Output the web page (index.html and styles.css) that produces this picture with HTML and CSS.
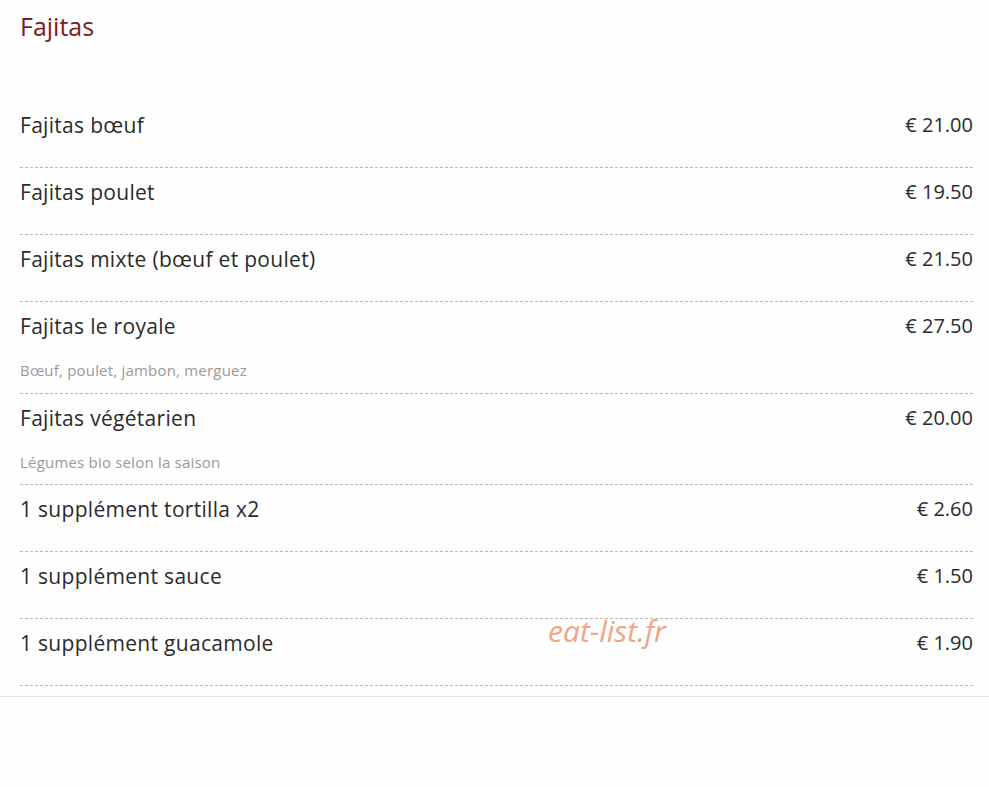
FILE: index.html
```html
<!DOCTYPE html>
<html lang="fr">
<head>
<meta charset="utf-8">
<title>Fajitas</title>
<link rel="stylesheet" href="styles.css">
</head>
<body>
<section class="menu">
  <h2 class="menu-title">Fajitas</h2>
  <ul class="items">
    <li class="item"><div class="row"><span class="name">Fajitas bœuf</span><span class="price">€ 21.00</span></div></li>
    <li class="item"><div class="row"><span class="name">Fajitas poulet</span><span class="price">€ 19.50</span></div></li>
    <li class="item"><div class="row"><span class="name">Fajitas mixte (bœuf et poulet)</span><span class="price">€ 21.50</span></div></li>
    <li class="item has-desc"><div class="row"><span class="name">Fajitas le royale</span><span class="price">€ 27.50</span></div><p class="desc">Bœuf, poulet, jambon, merguez</p></li>
    <li class="item has-desc"><div class="row"><span class="name">Fajitas végétarien</span><span class="price">€ 20.00</span></div><p class="desc">Légumes bio selon la saison</p></li>
    <li class="item"><div class="row"><span class="name">1 supplément tortilla x2</span><span class="price">€ 2.60</span></div></li>
    <li class="item"><div class="row"><span class="name">1 supplément sauce</span><span class="price">€ 1.50</span></div></li>
    <li class="item"><div class="row"><span class="name">1 supplément guacamole</span><span class="price">€ 1.90</span></div></li>
  </ul>
</section>
<div class="rule"></div>
<div class="watermark">eat-list.fr</div>
</body>
</html>
```
FILE: styles.css
```css
html, body {
  margin: 0;
  padding: 0;
  background: #fefefe;
  font-family: "Open Sans", "Noto Sans", sans-serif;
}
.menu {
  padding: 10px 16px 0 20px;
}
.menu-title {
  margin: 0 0 59px 0;
  font-size: 25px;
  line-height: 32px;
  font-weight: 400;
  color: #7a1d1d;
}
.items {
  list-style: none;
  margin: 0;
  padding: 0;
}
.item {
  padding: 12px 0 30px;
  border-bottom: 1px dashed #b8b8b8;
}
.item.has-desc {
  padding-bottom: 12.5px;
}
.row {
  display: flex;
  justify-content: space-between;
  align-items: center;
  height: 24px;
}
.name {
  font-size: 21px;
  line-height: 24px;
  letter-spacing: 0.3px;
  color: #2b2b2b;
}
.price {
  font-size: 20px;
  line-height: 24px;
  color: #2b2b2b;
}
.desc {
  margin: 22px 0 0 0;
  font-size: 15px;
  line-height: 20px;
  letter-spacing: 0.2px;
  color: #999;
}
.rule {
  margin-top: 10px;
  border-top: 1px solid #e2e2e2;
}
.watermark {
  position: absolute;
  left: 548px;
  top: 610px;
  font-size: 30px;
  font-style: italic;
  color: #f0a585;
  font-family: "Open Sans", "Noto Sans", sans-serif;
}
```
